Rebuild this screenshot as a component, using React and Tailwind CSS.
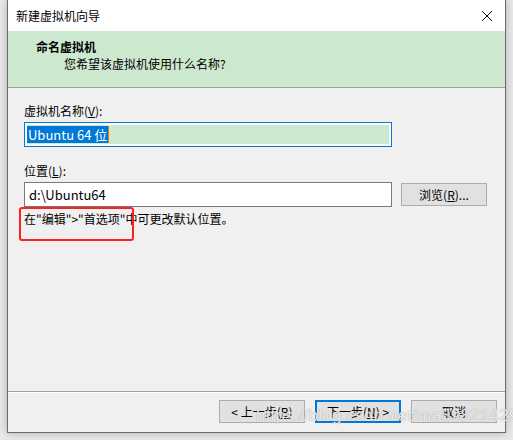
import React from "react";

const font = { fontFamily: '"Microsoft YaHei UI", "Noto Sans CJK SC", "Noto Sans", sans-serif' };

function WizardButton({ children, primary }) {
  return (
    <button
      className={
        primary
          ? "w-[86px] h-[23px] bg-[#e1e1e1] border-2 border-[#0078d7] text-[12px] leading-none text-black whitespace-nowrap"
          : "w-[86px] h-[23px] bg-[#e1e1e1] border border-[#adadad] text-[12px] leading-none text-black whitespace-nowrap"
      }
    >
      {children}
    </button>
  );
}

export default function App() {
  return (
    <div className="w-[513px] h-[440px] bg-[#e9e9e9] overflow-hidden relative" style={font}>
      <div className="ml-[7px] w-[499px] h-[433px] flex flex-col bg-[#f0f0f0] border-x border-b border-[#6b6b6b] shadow-[0_0_8px_rgba(0,0,0,0.25)]">
        {/* title bar */}
        <div className="h-[31px] bg-white flex items-center justify-between pl-[8px] pr-[10px]">
          <span className="text-[12px] text-black">新建虚拟机向导</span>
          <svg width="12" height="12" viewBox="0 0 12 12" className="mr-[2px]">
            <path d="M1 1 L11 11 M11 1 L1 11" stroke="#111" strokeWidth="1" />
          </svg>
        </div>

        {/* header */}
        <div className="h-[57px] bg-[#cce8cf] border-b border-[#a0a0a0] pl-[28px] pt-[8px]">
          <div className="text-[12px] leading-[16px] font-bold text-black">命名虚拟机</div>
          <div className="text-[12px] leading-[16px] text-black pl-[28px] mt-[1px]">您希望该虚拟机使用什么名称?</div>
        </div>

        {/* body */}
        <div className="relative h-[303px] pl-[16px]">
          <div className="mt-[15px] text-[12px] leading-[16px] text-black">
            虚拟机名称(<span className="underline">V</span>):
          </div>
          <div className="mt-[3px] w-[368px] h-[25px] bg-white border border-[#0078d7] p-[2px]">
            <div className="h-full bg-[#cce8cf] flex items-center">
              <span className="h-[17px] bg-[#0078d7] text-white text-[13px] leading-[17px] pl-[1px] pr-[1px]">Ubuntu 64 位</span>
              <span className="w-[1px] h-[17px] bg-[#f07800]"></span>
            </div>
          </div>

          <div className="mt-[16px] text-[12px] leading-[16px] text-black">
            位置(<span className="underline">L</span>):
          </div>
          <div className="mt-[3px] flex items-center gap-[9px]">
            <div className="w-[368px] h-[25px] bg-white border border-[#7a7a7a] flex items-center pl-[4px]">
              <span className="text-[13px] text-black">d:\Ubuntu64</span>
            </div>
            <button className="w-[86px] h-[23px] bg-[#e1e1e1] border border-[#adadad] text-[12px] leading-none text-black whitespace-nowrap">
              浏览(<span className="underline">R</span>)...
            </button>
          </div>

          <div className="mt-[4px] text-[12px] leading-[16px] text-black">
            在"编辑"&gt;"首选项"中可更改默认位置。
          </div>

          <div className="absolute left-[11px] top-[119px] w-[115px] h-[34px] border-2 border-[#ff1f1f] rounded-[3px]"></div>
        </div>

        {/* footer */}
        <div className="border-t border-[#a0a0a0]">
          <div className="border-t border-white h-[38px] flex justify-end items-start pt-[7px] pr-[8px] gap-[10px]">
            <WizardButton>
              &lt; 上一步(<span className="underline">B</span>)
            </WizardButton>
            <WizardButton primary>
              下一步(<span className="underline">N</span>) &gt;
            </WizardButton>
            <WizardButton>取消</WizardButton>
          </div>
        </div>
      </div>

      <div
        className="absolute left-[256px] top-[406px] text-[17px] leading-[20px] text-white/80 tracking-[0.2px] pointer-events-none whitespace-nowrap"
        style={{ fontFamily: '"Liberation Sans", Arial, sans-serif', textShadow: "0 0 1px rgba(110,110,110,0.8)" }}
      >
        https://blog.csdn.net/ma598214297
      </div>
    </div>
  );
}
